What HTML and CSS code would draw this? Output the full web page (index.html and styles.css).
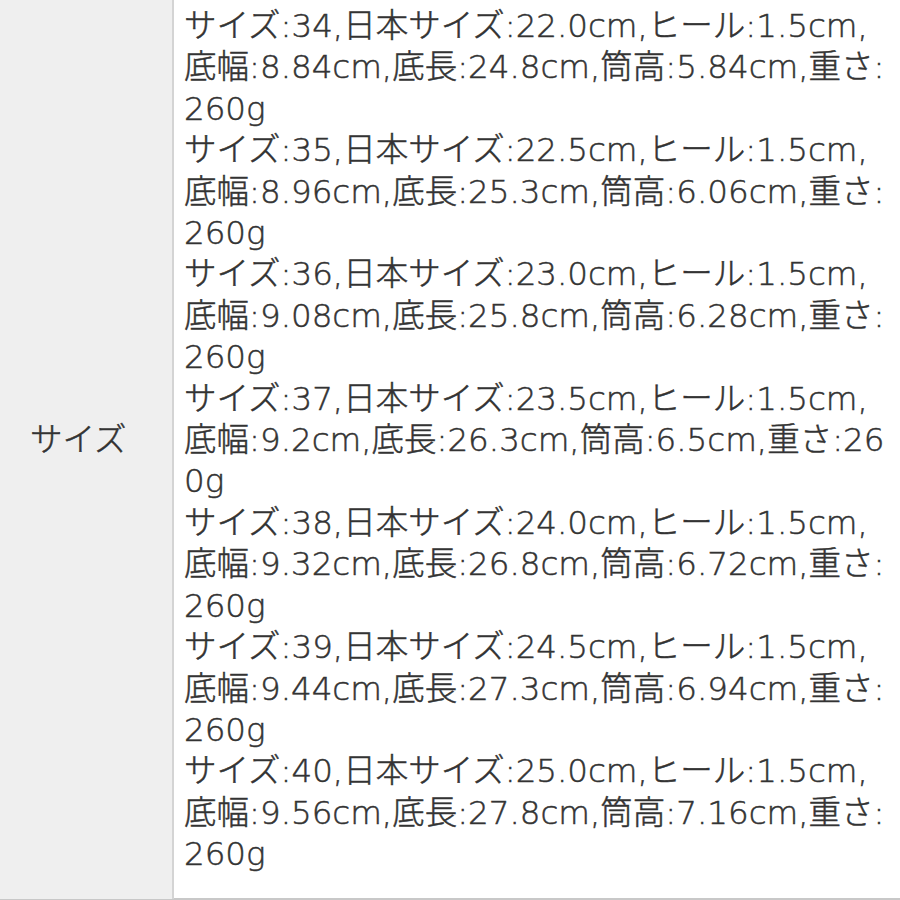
FILE: index.html
```html
<!DOCTYPE html>
<html lang="ja">
<head>
<meta charset="utf-8">
<link rel="stylesheet" href="styles.css">
</head>
<body>
<div class="spec">
  <div class="label">サイズ</div>
  <div class="value">サイズ:34,日本サイズ:22.0cm,ヒール:1.5cm,底幅:8.84cm,底長:24.8cm,筒高:5.84cm,重さ:260g<br>サイズ:35,日本サイズ:22.5cm,ヒール:1.5cm,底幅:8.96cm,底長:25.3cm,筒高:6.06cm,重さ:260g<br>サイズ:36,日本サイズ:23.0cm,ヒール:1.5cm,底幅:9.08cm,底長:25.8cm,筒高:6.28cm,重さ:260g<br>サイズ:37,日本サイズ:23.5cm,ヒール:1.5cm,底幅:9.2cm,底長:26.3cm,筒高:6.5cm,重さ:260g<br>サイズ:38,日本サイズ:24.0cm,ヒール:1.5cm,底幅:9.32cm,底長:26.8cm,筒高:6.72cm,重さ:260g<br>サイズ:39,日本サイズ:24.5cm,ヒール:1.5cm,底幅:9.44cm,底長:27.3cm,筒高:6.94cm,重さ:260g<br>サイズ:40,日本サイズ:25.0cm,ヒール:1.5cm,底幅:9.56cm,底長:27.8cm,筒高:7.16cm,重さ:260g</div>
</div>
</body>
</html>
```
FILE: styles.css
```css
html, body {
  margin: 0;
  padding: 0;
  background: #ffffff;
}
.spec {
  display: grid;
  grid-template-columns: 174px 1fr;
  width: 900px;
  height: 898px;
  border-bottom: 2px solid #c8c8c8;
  font-family: "DejaVu Sans", "Noto Sans CJK JP", sans-serif;
  font-weight: 300;
  color: #333333;
  -webkit-text-stroke: 0.5px #333333;
  font-size: 32.5px;
  line-height: 41.4px;
}
.label {
  background: #efefef;
  border-right: 2px solid #d4d4d4;
  display: flex;
  align-items: center;
  padding: 8px 0 25px 30px;
}
.value {
  padding: 6px 6px 23px 10px;
  word-break: break-all;
}
```
